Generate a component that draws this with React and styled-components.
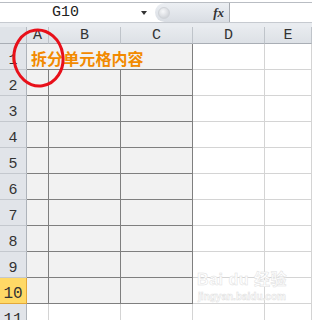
import React from "react";
import styled, { createGlobalStyle } from "styled-components";

const GlobalStyle = createGlobalStyle`
  html, body {
    margin: 0;
    padding: 0;
    background: #ffffff;
    overflow: hidden;
  }
  body {
    font-family: "Liberation Sans", "Noto Sans CJK SC", sans-serif;
  }
`;

const COLS = ["A", "B", "C", "D", "E"];
const ROWS = [1, 2, 3, 4, 5, 6, 7, 8, 9, 10, 11];

const Page = styled.div`
  width: 312px;
  height: 320px;
  position: relative;
  overflow: hidden;
`;

const Toolbar = styled.div`
  margin-top: 2px;
  height: 19px;
  border-top: 1px solid #b9bdc3;
  border-bottom: 1px solid #c6cad0;
  display: flex;
  align-items: stretch;
  background: #ffffff;
`;

const NameBox = styled.div`
  width: 153px;
  display: flex;
  align-items: center;
  position: relative;
  font-family: "Liberation Mono", "DejaVu Sans Mono", monospace;
  font-size: 15px;
  color: #222;
`;

const NameText = styled.span`
  margin-left: 52px;
`;

const Arrow = styled.span`
  position: absolute;
  left: 141px;
  top: 8px;
  border-left: 3.5px solid transparent;
  border-right: 3.5px solid transparent;
  border-top: 4px solid #333;
`;

const Pill = styled.div`
  width: 75px;
  margin-left: 2px;
  background: linear-gradient(#eceff3, #d9dde3);
  border-radius: 10px 0 0 10px;
  border-right: 1px solid #a6aab0;
  display: flex;
  align-items: center;
  justify-content: space-between;
  padding: 0 5px 0 3px;
  box-sizing: border-box;
`;

const Knob = styled.span`
  width: 10px;
  height: 10px;
  border-radius: 50%;
  background: radial-gradient(circle at 40% 35%, #f7f8fa, #c4c8ce);
  border: 1px solid #d0d3d8;
`;

const Fx = styled.span`
  font-family: "Liberation Serif", serif;
  font-style: italic;
  font-weight: bold;
  font-size: 13px;
  color: #333;
`;

const Formula = styled.div`
  flex: 1;
  background: #ffffff;
`;

const Strip = styled.div`
  height: 4px;
  background: #e9ecf0;
`;

const Sheet = styled.div`
  display: grid;
  grid-template-columns: 27px 22px 72px 72px 72px 47px;
  grid-template-rows: 17px repeat(11, 26px);
  position: relative;
`;

const Corner = styled.div`
  background: #dfe3e8;
  border-right: 1px solid #b7bcc3;
  border-bottom: 1px solid #a9aeb5;
`;

const ColHead = styled.div`
  background: linear-gradient(#e8ebef, #dde1e6);
  border-right: 1px solid #bfc4ca;
  border-bottom: 1px solid #a9aeb5;
  display: flex;
  align-items: center;
  justify-content: center;
  font-family: "Liberation Mono", "DejaVu Sans Mono", monospace;
  font-size: 15px;
  color: #333;
`;

const RowHead = styled.div`
  background: ${(p) => (p.$active ? "#ffd966" : "#e1e4e9")};
  border-right: 1px solid ${(p) => (p.$active ? "#e3a83a" : "#aeb3ba")};
  border-bottom: 1px solid ${(p) => (p.$active ? "#e3a83a" : "#c4c8ce")};
  display: flex;
  align-items: flex-end;
  justify-content: center;
  font-family: "Liberation Mono", "DejaVu Sans Mono", monospace;
  font-size: ${(p) => (p.$big ? "16px" : "15px")};
  line-height: 1;
  padding-bottom: 1px;
  color: #333;
  box-sizing: border-box;
`;

const Cell = styled.div`
  background: ${(p) => (p.$filled ? "#f2f2f2" : "#ffffff")};
  border-right: 1px solid ${(p) => (p.$darkRight ? "#7f7f7f" : "#d4d4d4")};
  border-bottom: 1px solid ${(p) => (p.$darkBottom ? "#7f7f7f" : "#d4d4d4")};
`;

const TitleCell = styled(Cell)`
  grid-column: span 3;
  display: flex;
  align-items: center;
  padding: 3px 0 0 4px;
  box-sizing: border-box;
  font-family: "Noto Sans CJK SC", sans-serif;
  font-weight: bold;
  font-size: 16px;
  letter-spacing: 0.1px;
  color: #f28a00;
  white-space: nowrap;
`;

const Circle = styled.svg`
  position: absolute;
  left: 11px;
  top: 1px;
  pointer-events: none;
`;

const Watermark = styled.div`
  position: absolute;
  left: 190px;
  top: 266px;
  width: 104px;
  text-align: center;
  white-space: nowrap;
  color: #ffffff;
  -webkit-text-stroke: 0.5px #e0e0e0;
  font-family: "Liberation Sans", "Noto Sans CJK SC", sans-serif;
  pointer-events: none;
`;

const MarkTop = styled.div`
  font-size: 16px;
  font-weight: bold;
  letter-spacing: 0.5px;
`;

const MarkBottom = styled.div`
  font-size: 10px;
  font-weight: bold;
  margin-top: 1px;
`;

export default function App() {
  return (
    <Page>
      <GlobalStyle />
      <Toolbar>
        <NameBox>
          <NameText>G10</NameText>
          <Arrow />
        </NameBox>
        <Pill>
          <Knob />
          <Fx>fx</Fx>
        </Pill>
        <Formula />
      </Toolbar>
      <Strip />
      <Sheet>
        <Corner />
        {COLS.map((c) => (
          <ColHead key={c}>{c}</ColHead>
        ))}
        {ROWS.map((r) => {
          const filledRow = r <= 10;
          return (
            <React.Fragment key={r}>
              <RowHead $active={r === 10} $big={r >= 10}>
                {r}
              </RowHead>
              {r === 1 ? (
                <TitleCell $filled $darkRight $darkBottom>
                  拆分单元格内容
                </TitleCell>
              ) : (
                ["A", "B", "C"].map((c) => (
                  <Cell
                    key={c}
                    $filled={filledRow}
                    $darkRight={filledRow}
                    $darkBottom={filledRow}
                  />
                ))
              )}
              <Cell />
              <Cell />
            </React.Fragment>
          );
        })}
        <Circle width="56" height="62" viewBox="0 0 56 62">
          <ellipse
            cx="27.5"
            cy="30"
            rx="24.5"
            ry="28"
            fill="none"
            stroke="#e8101a"
            strokeWidth="3"
            transform="rotate(-8 27.5 30)"
          />
        </Circle>
      </Sheet>
      <Watermark>
        <MarkTop>Bai du 经验</MarkTop>
        <MarkBottom>jingyan.baidu.com</MarkBottom>
      </Watermark>
    </Page>
  );
}
